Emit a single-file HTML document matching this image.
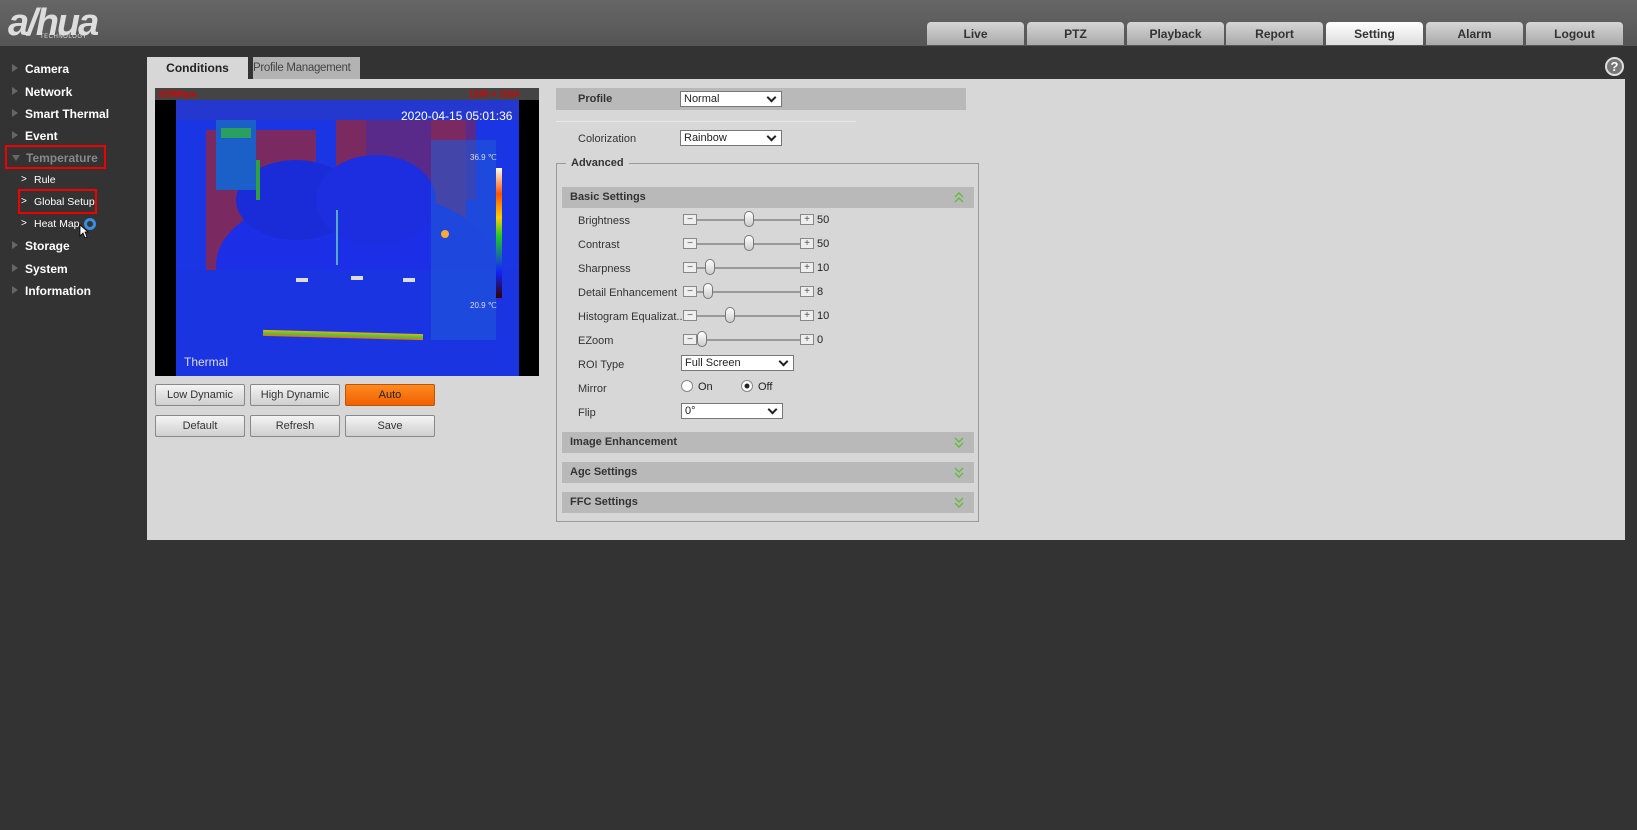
<!DOCTYPE html>
<html><head><meta charset="utf-8"><style>
*{margin:0;padding:0;box-sizing:border-box}
body{width:1637px;height:830px;background:#333;font-family:"Liberation Sans",Arial,sans-serif;position:relative;overflow:hidden;font-size:11px;color:#222}
.abs{position:absolute}
#hdr{left:0;top:0;width:1637px;height:46px;background:linear-gradient(#666,#555)}
.logo{left:8px;top:2px;font:italic bold 38px "Liberation Sans",sans-serif;color:#ddd;letter-spacing:-2px}
.tech{left:40px;top:34px;font-size:6px;color:#ddd;letter-spacing:.5px}
.tab{top:22px;height:23px;width:97px;background:linear-gradient(#d6d6d6,#a9a9a9);border-radius:4px 4px 0 0;font-weight:bold;font-size:12px;color:#333;text-align:center;line-height:24px}
.menu{left:25px;font-weight:bold;font-size:12px;color:#fff}
.tri{left:12px;width:0;height:0;border-left:6px solid #666;border-top:4px solid transparent;border-bottom:4px solid transparent}
.sub{left:34px;font-size:10.5px;color:#fff}
.chev{left:21px;color:#fff;font-size:10px}
.red{border:2px solid #e00}
#panel{left:147px;top:79px;width:1478px;height:461px;background:#d7d7d7}
.ptab{top:57px;height:22px;font-size:12px;line-height:22px;white-space:nowrap;overflow:hidden}
.btn{height:22px;width:90px;background:linear-gradient(#f4f4f4,#cfcfcf);border:1px solid #888;border-radius:2px;text-align:center;line-height:20px;font-size:11px;color:#333}
.bar{background:#b9b9b9;height:21px;font-weight:bold;font-size:11px;color:#333;line-height:21px;padding-left:8px}
.lbl{left:578px;font-size:11px;color:#333}
.sel{height:16px;background:#fff;border:1px solid #777;font-size:11px;line-height:14px;padding-left:3px}
.sel:after{content:"";position:absolute;right:6px;top:2px;width:5px;height:5px;border-right:2px solid #222;border-bottom:2px solid #222;transform:rotate(45deg)}
.pm{width:14px;height:11px;border:1px solid #888;background:#eee;font-size:10px;line-height:9px;text-align:center;color:#555}
.trk{height:2px;background:#999;left:697px;width:103px}
.hnd{width:10px;height:16px;border:1px solid #777;border-radius:5px;background:linear-gradient(#fff,#ccc)}
.dbl{position:absolute;right:10px;top:5px}
.r{position:absolute;background:#7a2a60}
.b{position:absolute;background:#1c2ee6;border-radius:50%}
</style></head><body>
<div id="hdr" class="abs"></div>
<div class="abs logo">a/hua</div>
<div class="abs tech">TECHNOLOGY</div>
<div class="abs tab" style="left:927px">Live</div>
<div class="abs tab" style="left:1027px">PTZ</div>
<div class="abs tab" style="left:1127px">Playback</div>
<div class="abs tab" style="left:1226px">Report</div>
<div class="abs tab" style="left:1326px;background:linear-gradient(#fff,#ddd)">Setting</div>
<div class="abs tab" style="left:1426px">Alarm</div>
<div class="abs tab" style="left:1526px">Logout</div>
<div class="abs" style="left:1605px;top:57px;width:19px;height:19px;border-radius:50%;border:2px solid #ddd;background:#777;color:#fff;font-weight:bold;font-size:13px;text-align:center;line-height:15px">?</div>

<div class="abs tri" style="top:64px"></div><div class="abs menu" style="top:62px">Camera</div>
<div class="abs tri" style="top:87px"></div><div class="abs menu" style="top:85px">Network</div>
<div class="abs tri" style="top:109px"></div><div class="abs menu" style="top:107px">Smart Thermal</div>
<div class="abs tri" style="top:131px"></div><div class="abs menu" style="top:129px">Event</div>
<div class="abs red" style="left:5px;top:145px;width:101px;height:24px"></div>
<div class="abs" style="left:12px;top:155px;border-top:6px solid #666;border-left:4px solid transparent;border-right:4px solid transparent"></div>
<div class="abs menu" style="top:151px;left:26px;color:#888">Temperature</div>
<div class="abs chev" style="top:174px">&gt;</div><div class="abs sub" style="top:174px">Rule</div>
<div class="abs red" style="left:18px;top:189px;width:79px;height:25px"></div>
<div class="abs chev" style="top:196px">&gt;</div><div class="abs sub" style="top:196px">Global Setup</div>
<div class="abs chev" style="top:218px">&gt;</div><div class="abs sub" style="top:218px">Heat Map</div>
<div class="abs" style="left:84px;top:218px;width:12px;height:12px;border-radius:50%;border:3px solid #3a8ee0"></div>
<svg class="abs" style="left:79px;top:224px" width="10" height="15"><path d="M1 1 L1 12 L4 9 L6 14 L8 13 L6 8 L9 8 Z" fill="#fff" stroke="#000" stroke-width=".8"/></svg>
<div class="abs tri" style="top:241px"></div><div class="abs menu" style="top:239px">Storage</div>
<div class="abs tri" style="top:264px"></div><div class="abs menu" style="top:262px">System</div>
<div class="abs tri" style="top:286px"></div><div class="abs menu" style="top:284px">Information</div>

<div id="panel" class="abs"></div>
<div class="abs ptab" style="left:147px;width:101px;background:#d7d7d7;font-weight:bold;text-align:center">Conditions</div>
<div class="abs ptab" style="left:253px;width:107px;background:#b3b3b3;color:#444;font-size:11.5px;letter-spacing:-.3px">Profile Management</div>

<div class="abs" style="left:155px;top:88px;width:384px;height:288px;background:#000"></div>
<div class="abs" style="left:155px;top:88px;width:384px;height:12px;background:#444;color:#d00;font-size:9px;font-weight:bold;line-height:12px;padding-left:3px">325Mbps<span style="position:absolute;right:20px">1280 × 1024</span></div>
<div class="abs" style="left:176px;top:100px;width:343px;height:276px;background:#1a36e4;overflow:hidden">
 <div class="r" style="left:30px;top:30px;width:110px;height:170px"></div>
 <div class="r" style="left:160px;top:0;width:30px;height:120px"></div>
 <div class="r" style="left:190px;top:0;width:110px;height:100px;background:#5a2a8a"></div>
 <div class="r" style="left:255px;top:20px;width:35px;height:200px"></div>
 <div class="r" style="left:0;top:0;width:343px;height:20px;background:#2438d0"></div>
 <div class="b" style="left:40px;top:90px;width:280px;height:150px"></div>
 <div class="b" style="left:60px;top:60px;width:120px;height:80px;background:#1a2cd8"></div>
 <div class="b" style="left:140px;top:55px;width:120px;height:90px;background:#1c2ee0"></div>
 <div class="r" style="left:0;top:170px;width:343px;height:106px;background:#1a34e2"></div>
 <div class="r" style="left:40px;top:20px;width:40px;height:70px;background:#1a60c8"></div>
 <div class="r" style="left:45px;top:28px;width:30px;height:10px;background:#2aa060"></div>
 <div class="r" style="left:80px;top:60px;width:4px;height:40px;background:#30a040"></div>
 <div class="r" style="left:255px;top:40px;width:65px;height:200px;background:#2058d8;opacity:.6"></div>
 <div class="r" style="left:160px;top:110px;width:2px;height:55px;background:#50b0c0"></div>
 <div class="r" style="left:265px;top:130px;width:8px;height:8px;background:#fa3;border-radius:50%"></div>
 <div class="r" style="left:120px;top:178px;width:12px;height:4px;background:#ddd"></div>
 <div class="r" style="left:175px;top:176px;width:12px;height:4px;background:#ddd"></div>
 <div class="r" style="left:227px;top:178px;width:12px;height:4px;background:#ddd"></div>
 <div class="r" style="left:87px;top:232px;width:160px;height:6px;background:linear-gradient(#fa0,#4c4,#f60);transform:rotate(1.5deg)"></div>
</div>
<div class="abs" style="left:496px;top:168px;width:6px;height:130px;background:linear-gradient(#ffe,#f50 20%,#fc0 38%,#2c2 52%,#12f 80%,#300)"></div>
<div class="abs" style="left:401px;top:109px;color:#fff;font-size:12px">2020-04-15 05:01:36</div>
<div class="abs" style="left:470px;top:153px;color:#ddd;font-size:8px">36.9 ℃</div>
<div class="abs" style="left:470px;top:301px;color:#ddd;font-size:8px">20.9 ℃</div>
<div class="abs" style="left:184px;top:355px;color:#ddd;font-size:12px">Thermal</div>

<div class="abs btn" style="left:155px;top:384px">Low Dynamic</div>
<div class="abs btn" style="left:250px;top:384px">High Dynamic</div>
<div class="abs btn" style="left:345px;top:384px;background:linear-gradient(#ff8a20,#f06000);border-color:#b50;color:#222">Auto</div>
<div class="abs btn" style="left:155px;top:415px">Default</div>
<div class="abs btn" style="left:250px;top:415px">Refresh</div>
<div class="abs btn" style="left:345px;top:415px">Save</div>

<div class="abs bar" style="left:556px;top:88px;width:410px;height:22px;line-height:22px;padding-left:22px">Profile</div>
<div class="abs sel" style="left:680px;top:91px;width:102px">Normal</div>
<div class="abs" style="left:556px;top:121px;width:300px;height:1px;background:#e8e8e8"></div>
<div class="abs lbl" style="top:133px">Colorization</div>
<div class="abs sel" style="left:680px;top:130px;width:102px">Rainbow</div>
<div class="abs" style="left:556px;top:163px;width:423px;height:359px;border:1px solid #999"></div>
<div class="abs" style="left:566px;top:157px;background:#d7d7d7;padding:0 5px;font-weight:bold;font-size:11px;color:#333">Advanced</div>
<div class="abs bar" style="left:562px;top:187px;width:412px">Basic Settings<svg class="dbl" width="10" height="11"><path d="M1 5 L5 1 L9 5 M1 10 L5 6 L9 10" fill="none" stroke="#6b4" stroke-width="1.5"/></svg></div>

<div class="abs lbl" style="top:215px">Brightness</div>
<div class="abs lbl" style="top:239px">Contrast</div>
<div class="abs lbl" style="top:263px">Sharpness</div>
<div class="abs lbl" style="top:287px">Detail Enhancement</div>
<div class="abs lbl" style="top:311px">Histogram Equalizat...</div>
<div class="abs lbl" style="top:335px">EZoom</div>
<div class="abs lbl" style="top:359px">ROI Type</div>
<div class="abs lbl" style="top:383px">Mirror</div>
<div class="abs lbl" style="top:407px">Flip</div>

<div class="abs pm" style="left:683px;top:214px">−</div><div class="abs trk" style="top:219px"></div><div class="abs pm" style="left:800px;top:214px">+</div><div class="abs hnd" style="left:744px;top:211px"></div><div class="abs" style="left:817px;top:214px">50</div>
<div class="abs pm" style="left:683px;top:238px">−</div><div class="abs trk" style="top:243px"></div><div class="abs pm" style="left:800px;top:238px">+</div><div class="abs hnd" style="left:744px;top:235px"></div><div class="abs" style="left:817px;top:238px">50</div>
<div class="abs pm" style="left:683px;top:262px">−</div><div class="abs trk" style="top:267px"></div><div class="abs pm" style="left:800px;top:262px">+</div><div class="abs hnd" style="left:705px;top:259px"></div><div class="abs" style="left:817px;top:262px">10</div>
<div class="abs pm" style="left:683px;top:286px">−</div><div class="abs trk" style="top:291px"></div><div class="abs pm" style="left:800px;top:286px">+</div><div class="abs hnd" style="left:703px;top:283px"></div><div class="abs" style="left:817px;top:286px">8</div>
<div class="abs pm" style="left:683px;top:310px">−</div><div class="abs trk" style="top:315px"></div><div class="abs pm" style="left:800px;top:310px">+</div><div class="abs hnd" style="left:725px;top:307px"></div><div class="abs" style="left:817px;top:310px">10</div>
<div class="abs pm" style="left:683px;top:334px">−</div><div class="abs trk" style="top:339px"></div><div class="abs pm" style="left:800px;top:334px">+</div><div class="abs hnd" style="left:697px;top:331px"></div><div class="abs" style="left:817px;top:334px">0</div>

<div class="abs sel" style="left:681px;top:355px;width:113px">Full Screen</div>
<div class="abs" style="left:681px;top:380px;width:12px;height:12px;border-radius:50%;border:1px solid #888;background:#fff"></div>
<div class="abs" style="left:698px;top:381px">On</div>
<div class="abs" style="left:741px;top:380px;width:12px;height:12px;border-radius:50%;border:1px solid #888;background:radial-gradient(#222 30%,#fff 40%)"></div>
<div class="abs" style="left:758px;top:381px">Off</div>
<div class="abs sel" style="left:681px;top:403px;width:102px">0°</div>

<div class="abs bar" style="left:562px;top:432px;width:412px">Image Enhancement<svg class="dbl" width="10" height="11"><path d="M1 1 L5 5 L9 1 M1 6 L5 10 L9 6" fill="none" stroke="#6b4" stroke-width="1.5"/></svg></div>
<div class="abs bar" style="left:562px;top:462px;width:412px">Agc Settings<svg class="dbl" width="10" height="11"><path d="M1 1 L5 5 L9 1 M1 6 L5 10 L9 6" fill="none" stroke="#6b4" stroke-width="1.5"/></svg></div>
<div class="abs bar" style="left:562px;top:492px;width:412px">FFC Settings<svg class="dbl" width="10" height="11"><path d="M1 1 L5 5 L9 1 M1 6 L5 10 L9 6" fill="none" stroke="#6b4" stroke-width="1.5"/></svg></div>
</body></html>
